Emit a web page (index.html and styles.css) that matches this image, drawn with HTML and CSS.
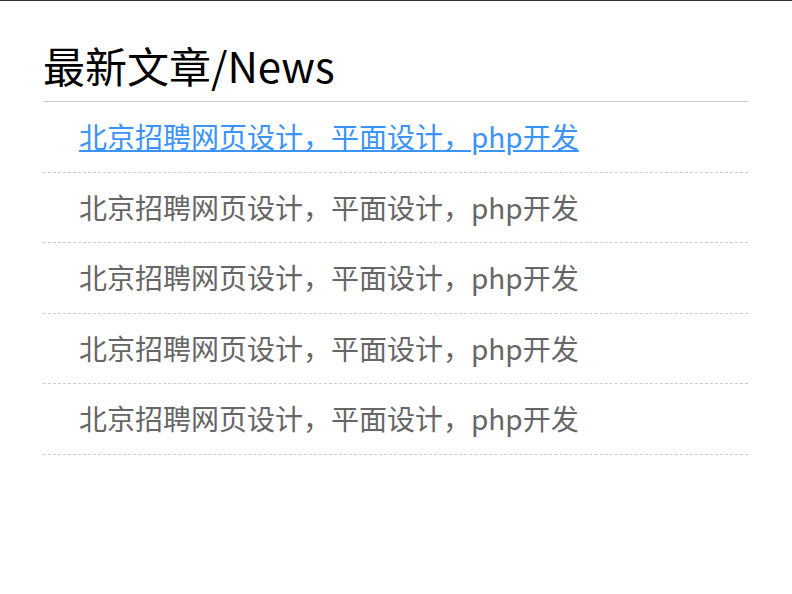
FILE: index.html
```html
<!DOCTYPE html>
<html lang="zh-CN">
<head>
<meta charset="utf-8">
<title>最新文章</title>
<link rel="stylesheet" href="styles.css">
</head>
<body>
<div class="topbar"></div>
<section class="news">
  <h2 class="news-title">最新文章/News</h2>
  <ul class="news-list">
    <li class="news-item"><a class="news-link active" href="#">北京招聘网页设计，平面设计，php开发</a></li>
    <li class="news-item"><a class="news-link" href="#">北京招聘网页设计，平面设计，php开发</a></li>
    <li class="news-item"><a class="news-link" href="#">北京招聘网页设计，平面设计，php开发</a></li>
    <li class="news-item"><a class="news-link" href="#">北京招聘网页设计，平面设计，php开发</a></li>
    <li class="news-item"><a class="news-link" href="#">北京招聘网页设计，平面设计，php开发</a></li>
  </ul>
</section>
</body>
</html>
```

FILE: styles.css
```css
html, body {
  margin: 0;
  padding: 0;
  background: #fff;
}
body {
  font-family: "Noto Sans CJK SC", "Noto Sans", sans-serif;
}
.topbar {
  height: 1px;
  background: #333;
}
.news {
  width: 705px;
  margin: 0 0 0 43px;
  padding-top: 35px;
}
.news-title {
  margin: 0;
  padding-bottom: 7px;
  font-size: 42px;
  font-weight: normal;
  color: #000;
  line-height: 58px;
  border-bottom: 1px solid #ccc;
}
.news-list {
  list-style: none;
  margin: 0;
  padding: 0;
}
.news-item {
  padding: 14px 0 14px 36px;
  line-height: 41.6px;
  font-size: 28px;
  border-bottom: 1px dashed #ccc;
}
.news-link {
  color: #666;
  text-decoration: none;
}
.news-link.active {
  color: #3b93fc;
  text-decoration: underline;
}
```
